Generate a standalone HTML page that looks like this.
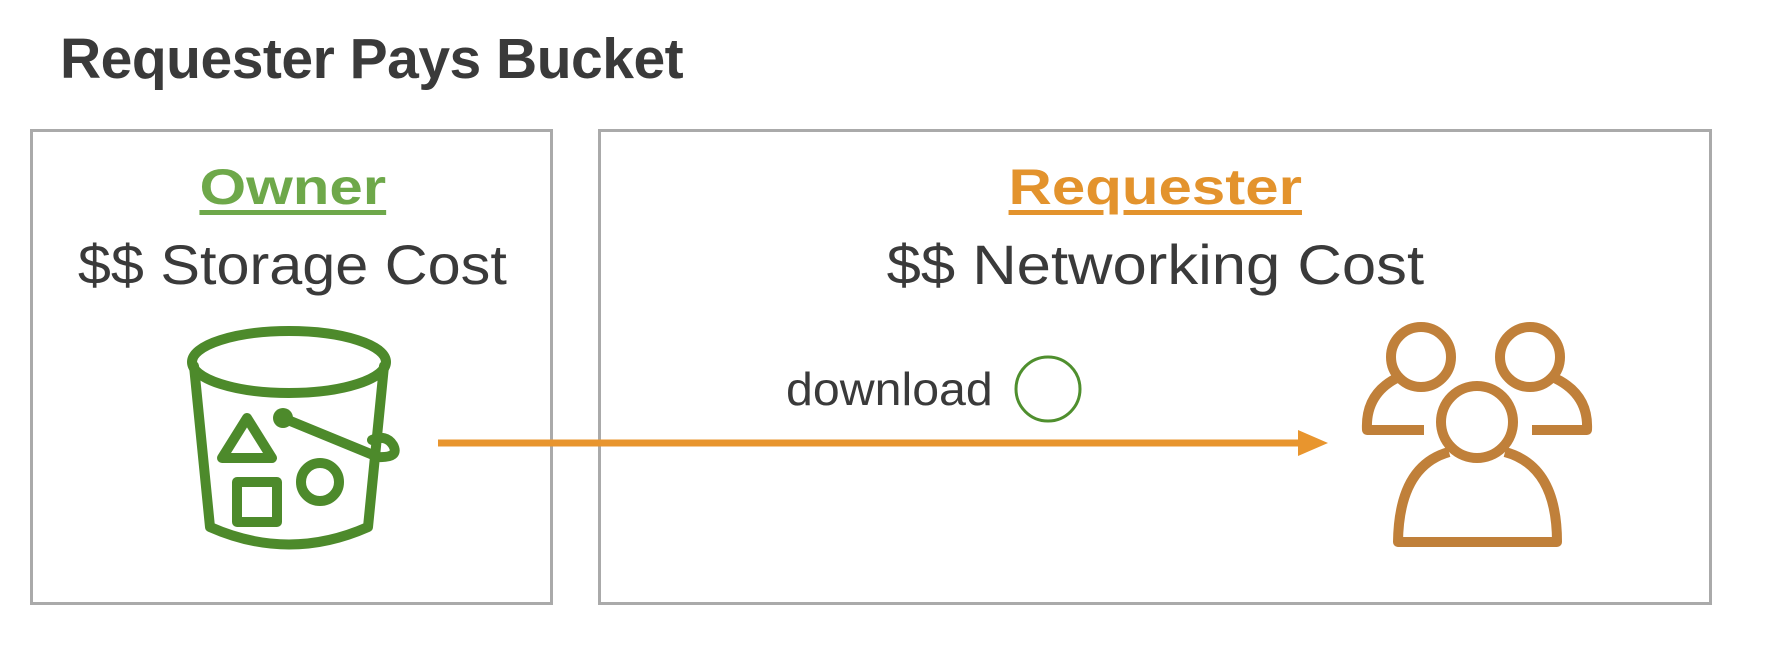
<!DOCTYPE html>
<html><head><style>
body{margin:0;width:1774px;height:654px;background:#fff;overflow:hidden;position:relative;font-family:"Liberation Sans",sans-serif}
.t{position:absolute;white-space:nowrap;color:#3a3a3a}
.box{position:absolute;border:3px solid #aaa;box-sizing:border-box}
.s{display:inline-block;transform-origin:center}
</style></head><body>
<div class="t" style="left:60px;top:26px;font-size:57px;font-weight:bold;letter-spacing:-0.5px">Requester Pays Bucket</div>
<div class="box" style="left:30px;top:129px;width:523px;height:476px"></div>
<div class="box" style="left:598px;top:129px;width:1114px;height:476px"></div>
<div class="t" style="left:32px;width:521px;text-align:center;top:158px;font-size:50px;font-weight:bold;color:#6ea84a"><span class="s" style="transform:scaleX(1.2);text-decoration:underline;text-decoration-thickness:5px;text-underline-offset:6px">Owner</span></div>
<div class="t" style="left:32px;width:521px;text-align:center;top:232px;font-size:56px"><span class="s" style="transform:scaleX(1.06)">$$ Storage Cost</span></div>
<div class="t" style="left:600px;width:1110px;text-align:center;top:158px;font-size:50px;font-weight:bold;color:#e3932d"><span class="s" style="transform:scaleX(1.2);text-decoration:underline;text-decoration-thickness:5px;text-underline-offset:6px">Requester</span></div>
<div class="t" style="left:600px;width:1110px;text-align:center;top:232px;font-size:56px"><span class="s" style="transform:scaleX(1.1)">$$ Networking Cost</span></div>
<div class="t" style="left:786px;top:362px;font-size:46px"><span class="s" style="transform:scaleX(1.05);transform-origin:left">download</span></div>
<svg width="1774" height="654" style="position:absolute;left:0;top:0">
<circle cx="1048" cy="389" r="32" fill="none" stroke="#4f8f2e" stroke-width="3"/>
<line x1="438" y1="443" x2="1300" y2="443" stroke="#e8952e" stroke-width="7"/>
<polygon points="1298,430 1328,443 1298,456" fill="#e8952e"/>
<g fill="none" stroke="#4d8a2b" stroke-width="10" stroke-linejoin="round" stroke-linecap="round">
<ellipse cx="289" cy="362" rx="97" ry="31"/>
<path d="M194 366 L210 527 Q289 562 368 527 L384 366"/>
<path d="M222 458 L247 418 L272 458 Z"/>
<rect x="237" y="482" width="40" height="40"/>
<circle cx="320" cy="482" r="19"/>
<path d="M283 418 L378 457 Q400 458 393 445 Q386 434 372 440"/>
</g>
<circle cx="283" cy="418" r="10" fill="#4d8a2b"/>
<g fill="none" stroke="#c0803a" stroke-width="10" stroke-linejoin="round" transform="translate(-6,0)">
<circle cx="1427" cy="357" r="30"/>
<circle cx="1536" cy="357" r="30"/>
<circle cx="1483" cy="422" r="36"/>
<path d="M1430 430 L1373 430 Q1371 392 1407 376"/>
<path d="M1556 376 Q1595 392 1593 430 L1538 430"/>
<path d="M1455 452 Q1405 466 1404 542 L1563 542 Q1563 466 1511 452"/>
</g>
</svg>
</body></html>
